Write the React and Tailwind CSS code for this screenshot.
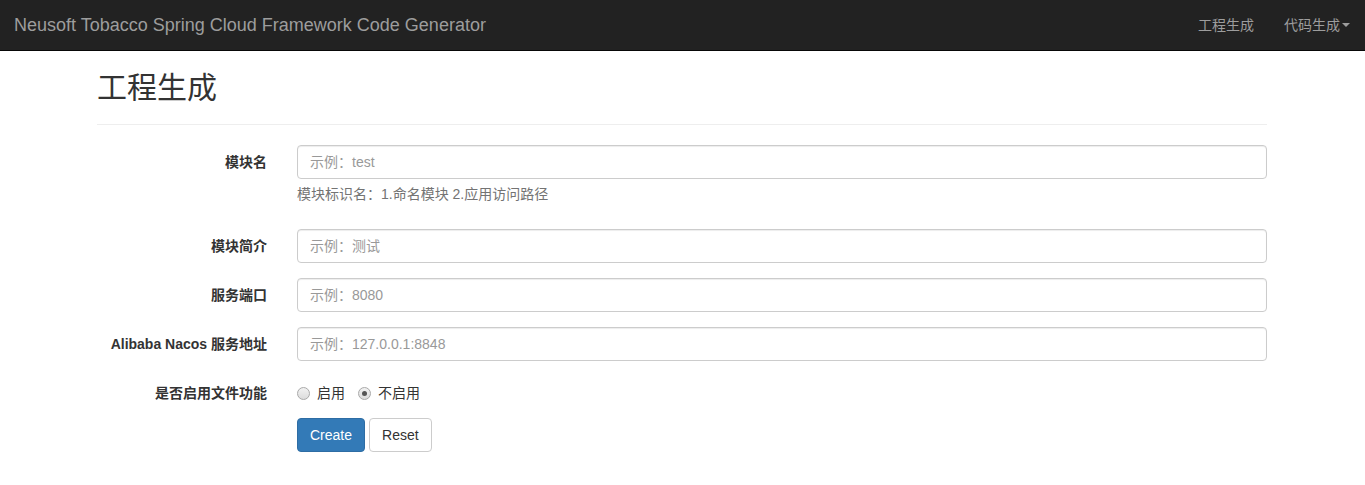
import React from "react";

const font = { fontFamily: '"Liberation Sans", "Noto Sans CJK SC", Arial, sans-serif' };

function Field({ label, placeholder, help }) {
  return (
    <div className="flex mb-[15px]">
      <label className="w-[200px] shrink-0 px-[15px] pt-[7px] text-right text-[14px] font-bold leading-[20px] text-[#333]">
        {label}
      </label>
      <div className="flex-1 px-[15px]">
        <input
          className="block w-full h-[34px] px-[12px] py-[6px] text-[14px] leading-[20px] text-[#555] bg-white border border-[#ccc] rounded-[4px] shadow-[inset_0_1px_1px_rgba(0,0,0,0.075)] placeholder:text-[#999] outline-none"
          placeholder={placeholder}
          style={font}
        />
        {help && (
          <p className="mt-[5px] mb-[10px] text-[14px] leading-[20px] text-[#737373]">{help}</p>
        )}
      </div>
    </div>
  );
}

function Radio({ checked, label }) {
  return (
    <label className="flex items-center mr-[13px] text-[14px] leading-[20px] text-[#333]">
      <span className="w-[13px] h-[13px] rounded-full border border-[#a9a9a9] bg-gradient-to-b from-[#f2f2f2] to-[#dcdcdc] flex items-center justify-center mr-[7px]">
        {checked && <span className="w-[5px] h-[5px] rounded-full bg-[#555]" />}
      </span>
      {label}
    </label>
  );
}

export default function App() {
  return (
    <div className="min-h-[485px] bg-white" style={font}>
      <nav className="h-[51px] bg-[#222] border-b border-[#080808] flex items-center justify-between">
        <div className="pl-[14px] text-[18px] leading-[20px] text-[#9d9d9d]">
          Neusoft Tobacco Spring Cloud Framework Code Generator
        </div>
        <div className="flex text-[14px] leading-[20px] text-[#9d9d9d]">
          <span className="px-[15px]">工程生成</span>
          <span className="px-[15px] flex items-center">
            代码生成
            <span className="ml-[2px] w-0 h-0 border-l-[4px] border-r-[4px] border-t-[4px] border-l-transparent border-r-transparent border-t-[#9d9d9d]" />
          </span>
        </div>
      </nav>
      <div className="w-[1170px] ml-[97px]">
        <div className="mt-[20px] pb-[19px] border-b border-[#eee] mb-[20px]">
          <h1 className="text-[30px] leading-[34px] text-[#333] font-normal">工程生成</h1>
        </div>
        <div className="-mx-[15px]">
          <Field label="模块名" placeholder="示例：test" help="模块标识名：1.命名模块 2.应用访问路径" />
          <Field label="模块简介" placeholder="示例：测试" />
          <Field label="服务端口" placeholder="示例：8080" />
          <Field label="Alibaba Nacos 服务地址" placeholder="示例：127.0.0.1:8848" />
          <div className="flex mb-[15px]">
            <label className="w-[200px] shrink-0 px-[15px] pt-[7px] text-right text-[14px] font-bold leading-[20px] text-[#333]">
              是否启用文件功能
            </label>
            <div className="flex-1 px-[15px] pt-[7px] flex">
              <Radio label="启用" />
              <Radio checked label="不启用" />
            </div>
          </div>
          <div className="flex">
            <div className="w-[200px] shrink-0" />
            <div className="flex-1 px-[15px] flex gap-[4px]">
              <button className="h-[34px] px-[12px] text-[14px] leading-[20px] text-white bg-[#337ab7] border border-[#2e6da4] rounded-[4px]">
                Create
              </button>
              <button className="h-[34px] px-[12px] text-[14px] leading-[20px] text-[#333] bg-white border border-[#ccc] rounded-[4px]">
                Reset
              </button>
            </div>
          </div>
        </div>
      </div>
    </div>
  );
}
